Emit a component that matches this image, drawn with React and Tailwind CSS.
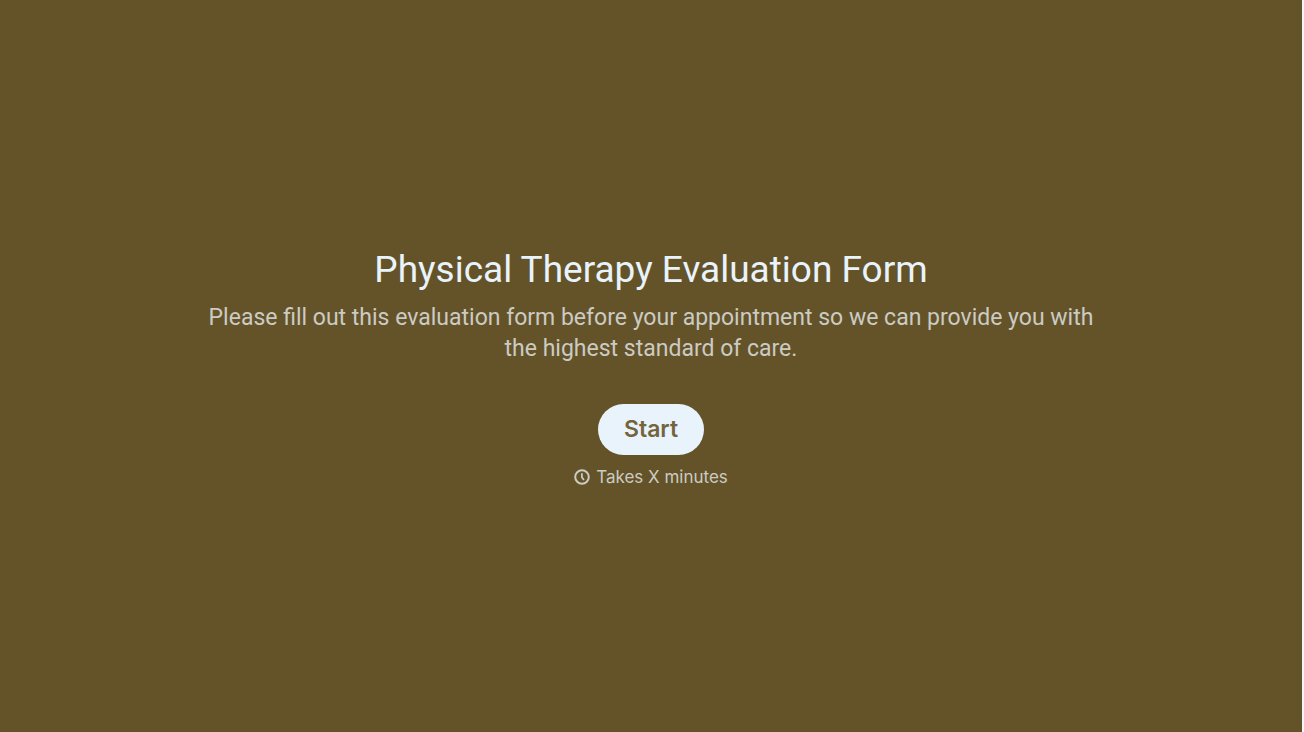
import { useState } from 'react';

export default function App() {
  const [started, setStarted] = useState(false);

  return (
    <div className="min-h-screen bg-gray-100 pr-0.5 font-['Roboto',sans-serif]">
      <main className="flex min-h-screen flex-col items-center justify-center bg-[#645328] px-6 text-center">
        <h1 className="text-[37px] leading-12 text-[#e9f3fc]">
          Physical Therapy Evaluation Form
        </h1>
        <p className="mt-2 max-w-[900px] text-[23px] leading-[31px] text-[#cbcbc4]">
          Please fill out this evaluation form before your appointment so we can provide you with
          the highest standard of care.
        </p>

        <button
          type="button"
          aria-pressed={started}
          onClick={() => setStarted(true)}
          className="mt-10 cursor-pointer rounded-full bg-[#e9f3fc] px-[26px] py-2.5 font-['Inter',sans-serif] text-[23px] leading-[31px] font-semibold text-[#74643d]"
        >
          Start
        </button>

        {/* Time estimate */}
        <div className="mt-3 flex items-center gap-1.5 font-['Inter',sans-serif] text-[17px] leading-5 text-[#cbcbc4]">
          <svg className="h-4 w-4" viewBox="0 0 16 16" fill="none" stroke="currentColor">
            <circle cx="8" cy="8" r="6.8" strokeWidth="2" />
            <path d="M7.9 4.2v4l2 2.8" strokeWidth="1.8" />
          </svg>
          <span>Takes X minutes</span>
        </div>
      </main>
    </div>
  );
}
